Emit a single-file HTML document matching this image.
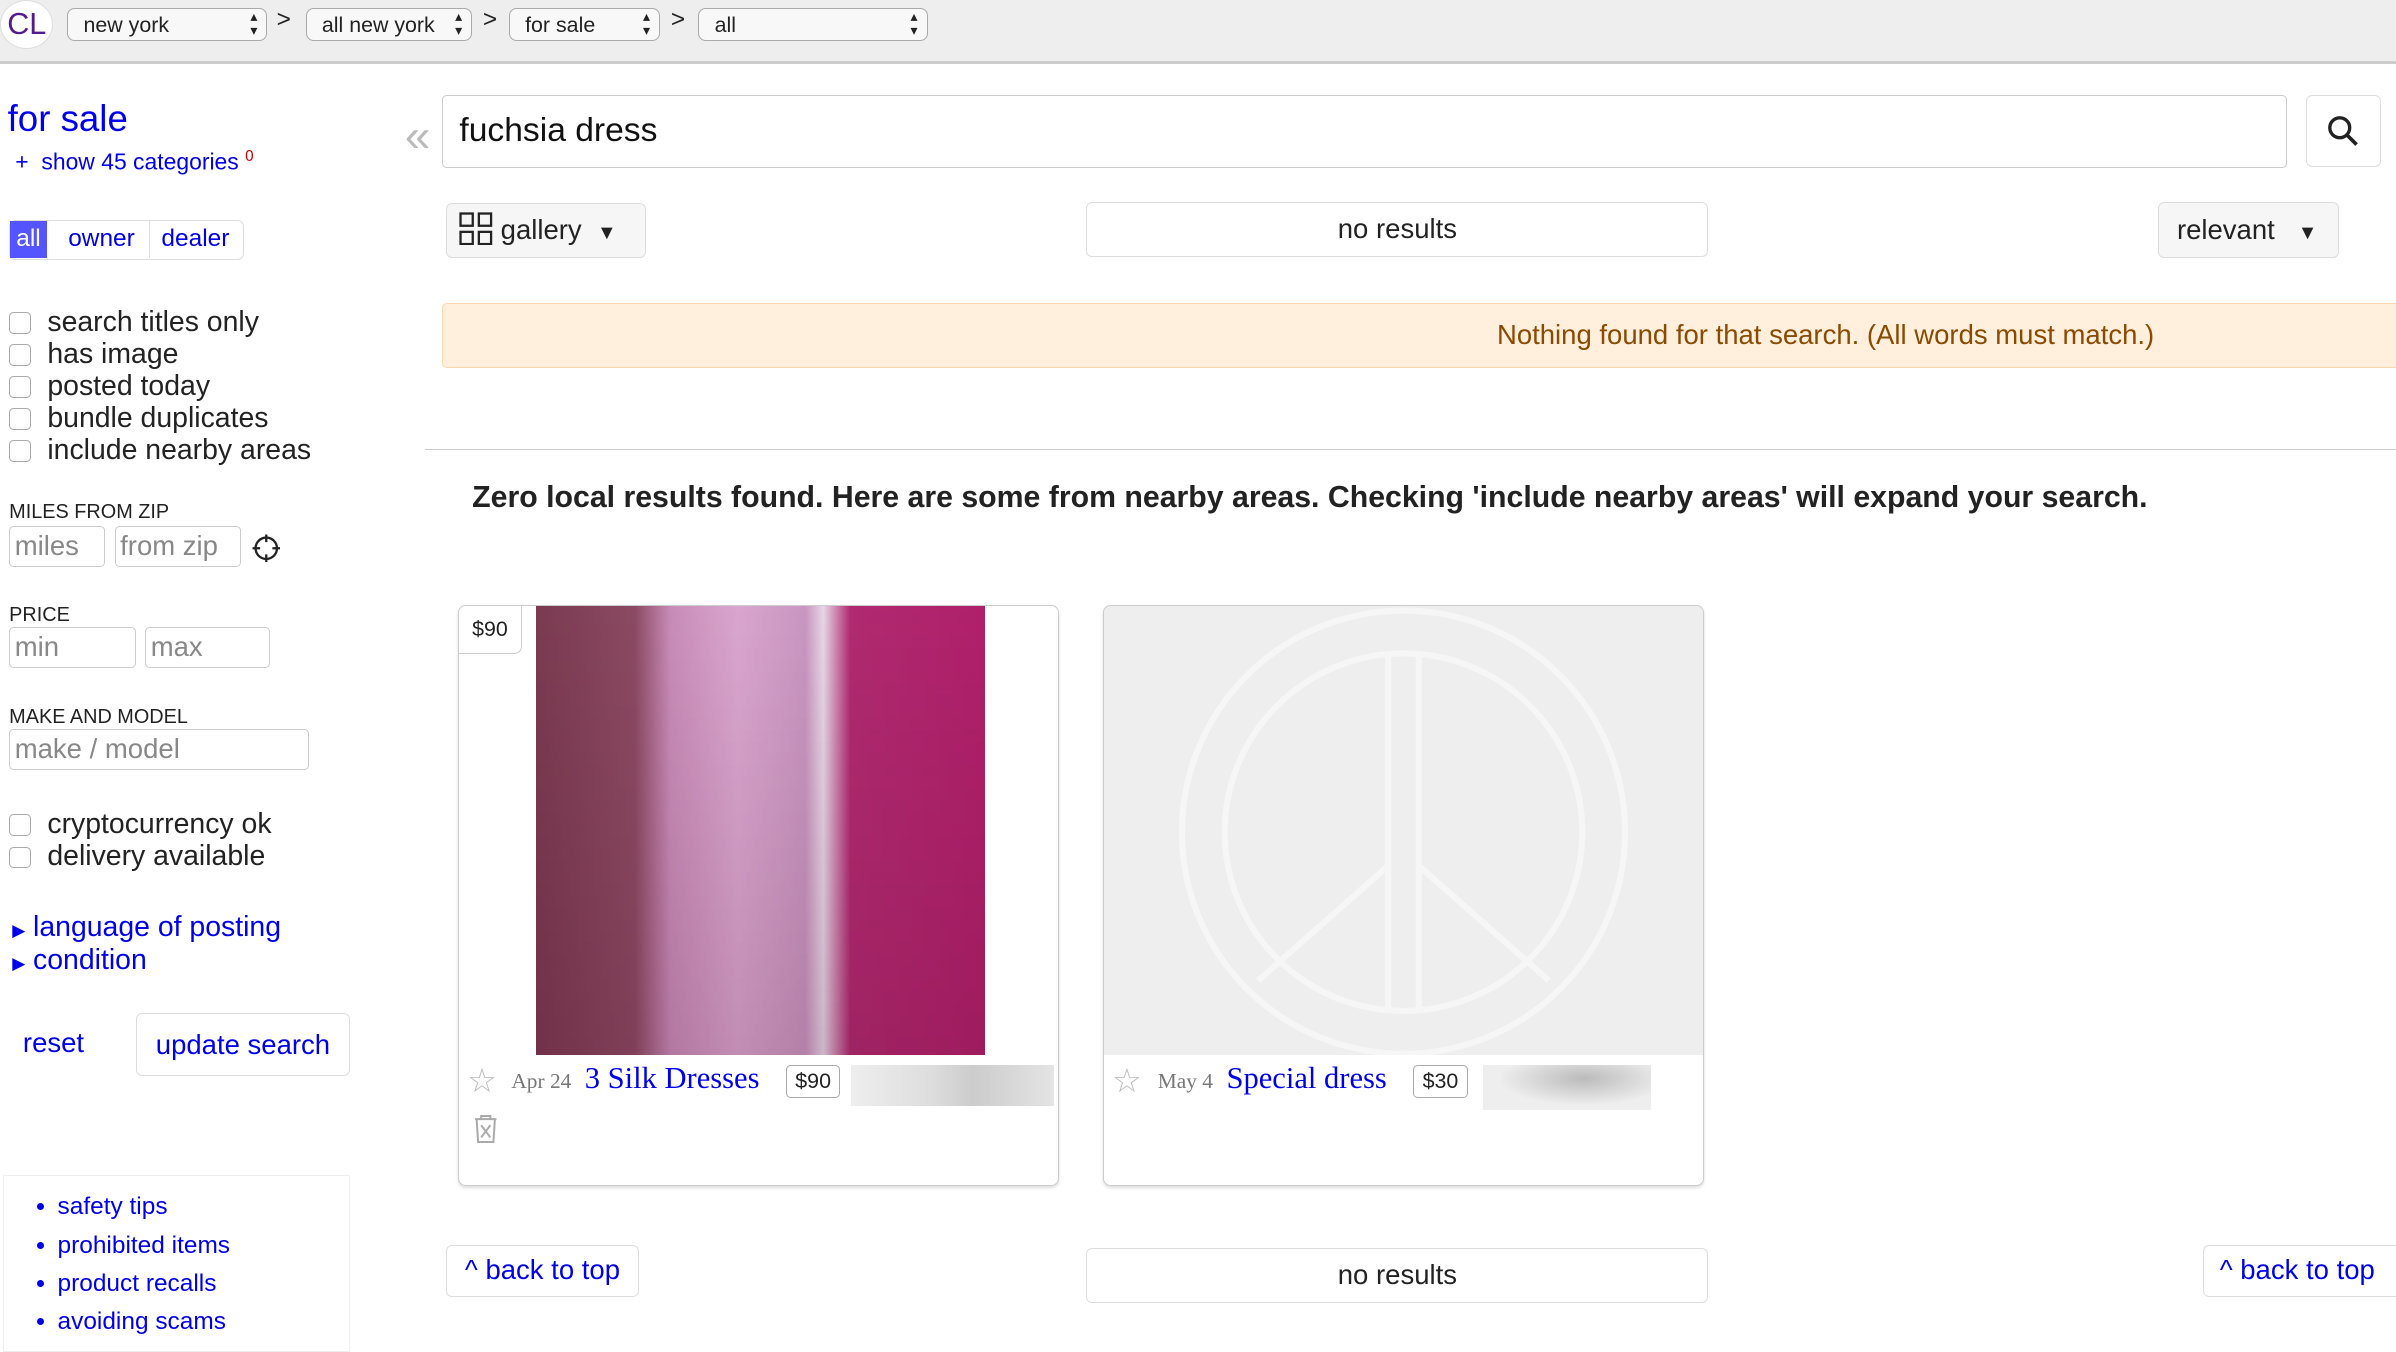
<!DOCTYPE html>
<html><head><meta charset="utf-8"><style>
html{zoom:1.52806}
body{margin:0;width:1568px;height:885px;overflow:hidden;position:relative;font-family:"Liberation Sans",Arial,sans-serif;color:#222;background:#fff}
.a{position:absolute}
.top{left:0;top:0;width:1568px;height:42px;background:#eee;border-bottom:2px solid #ccc;box-sizing:border-box}
.sel{position:absolute;top:5px;height:22px;border:1px solid #aaa;border-radius:5px;background:#f8f8f8;font-size:14px;line-height:21px;padding-left:10px;box-sizing:border-box}
.sel:after{content:"▴\A▾";white-space:pre;position:absolute;right:6px;top:1px;font-size:9px;line-height:9px}
.gt{position:absolute;top:4px;font-size:16px}
.blue{color:#00e}
.cb{position:absolute;left:6px;width:13px;height:13px;border:1px solid #aaa;border-radius:3px;background:#fff}
.lbl{position:absolute;left:31px;font-size:18.6px;line-height:21px}
.cap{position:absolute;left:6px;font-size:13px}
.inp{position:absolute;border:1px solid #ccc;border-radius:3px;box-sizing:border-box;font-size:18px;color:#888;padding-left:3px;line-height:25px}
.btn{position:absolute;border:1px solid #ddd;border-radius:4px;box-sizing:border-box;background:#f6f6f6;font-size:18px;text-align:center}
.card{position:absolute;top:396px;width:393px;height:380px;border:1px solid #ccc;border-radius:5px;box-sizing:border-box;box-shadow:0 1px 2px #ddd;overflow:hidden}
.serif{font-family:"Liberation Serif",serif}
</style></head><body>
<div class="a top"></div>
<div class="a" style="left:0;top:0;width:35px;height:32px;border-radius:50%;background:#fff;border:1px solid #ddd;color:#551a8b;font-size:20px;line-height:31px;text-align:center;box-sizing:border-box">CL</div>
<div class="sel" style="left:44px;width:131px">new york</div><div class="gt" style="left:181px">&gt;</div>
<div class="sel" style="left:200px;width:109px">all new york</div><div class="gt" style="left:316px">&gt;</div>
<div class="sel" style="left:333px;width:99px">for sale</div><div class="gt" style="left:439px">&gt;</div>
<div class="sel" style="left:457px;width:150px">all</div>

<div class="a blue" style="left:5px;top:64px;font-size:24px">for sale</div>
<div class="a blue" style="left:10px;top:97px;font-size:15px">+ &nbsp;show 45 categories <sup style="color:#c00;font-size:10px">0</sup></div>
<div class="a" style="left:265px;top:72px;font-size:30px;color:#bbb">«</div>
<div class="a" style="left:289px;top:62px;width:1208px;height:48px;border:1px solid #ccc;border-radius:3px;box-sizing:border-box;font-size:22px;line-height:46px;padding-left:11px;color:#111">fuchsia dress</div>
<div class="btn" style="left:1509px;top:62px;width:49px;height:47px;background:#fff"><svg width="22" height="22" viewBox="0 0 22 22" style="margin-top:12px"><circle cx="9" cy="9" r="6.5" fill="none" stroke="#222" stroke-width="2.2"/><line x1="14" y1="14" x2="20" y2="20" stroke="#222" stroke-width="2.4"/></svg></div>

<div class="a" style="left:6px;top:144px;width:154px;height:26px;border:1px solid #ddd;border-radius:4px;box-sizing:border-box;font-size:16px;line-height:24px">
<span style="position:absolute;left:0;top:0;width:24px;height:24px;background:#55f;color:#fff;text-align:center">all</span>
<span class="blue" style="position:absolute;left:38px">owner</span><span style="position:absolute;top:0;height:24px;border-left:1px solid #ddd;left:91px"></span><span class="blue" style="position:absolute;left:99px">dealer</span></div>

<div class="btn" style="left:292px;top:133px;width:131px;height:36px;line-height:34px;text-align:left;padding-left:8px"><svg width="22" height="22" viewBox="0 0 22 22" style="vertical-align:-4px"><g fill="none" stroke="#222" stroke-width="1.5"><rect x="1" y="1" width="8" height="8"/><rect x="13" y="1" width="8" height="8"/><rect x="1" y="13" width="8" height="8"/><rect x="13" y="13" width="8" height="8"/></g></svg> gallery &nbsp;<span style="font-size:13px">▼</span></div>
<div class="btn" style="left:711px;top:132px;width:407px;height:36px;line-height:34px;background:#fff">no results</div>
<div class="btn" style="left:1412px;top:132px;width:119px;height:37px;line-height:35px;text-align:left;padding-left:12px">relevant &nbsp;&nbsp;<span style="font-size:13px">▼</span></div>

<div class="a" style="left:289px;top:198px;width:1290px;height:43px;background:#ffefdc;border:1px solid #fbd8b0;box-sizing:border-box;border-radius:3px;color:#8a4a00;font-size:18px;line-height:41px;text-align:left;padding-left:690px">Nothing found for that search. (All words must match.)</div>
<div class="a" style="left:278px;top:294px;width:1290px;border-top:1px solid #ccc"></div>
<div class="a" style="left:309px;top:315px;font-size:19.8px;font-weight:bold;color:#222;white-space:nowrap">Zero local results found. Here are some from nearby areas. Checking 'include nearby areas' will expand your search.</div>

<div class="cb" style="top:204px"></div><div class="lbl" style="top:200px">search titles only</div>
<div class="cb" style="top:225px"></div><div class="lbl" style="top:221px">has image</div>
<div class="cb" style="top:246px"></div><div class="lbl" style="top:242px">posted today</div>
<div class="cb" style="top:267px"></div><div class="lbl" style="top:263px">bundle duplicates</div>
<div class="cb" style="top:288px"></div><div class="lbl" style="top:284px">include nearby areas</div>

<div class="cap" style="top:328px">MILES FROM ZIP</div>
<div class="inp" style="left:6px;top:344px;width:63px;height:27px">miles</div>
<div class="inp" style="left:75px;top:344px;width:83px;height:27px">from zip</div>
<svg class="a" style="left:164px;top:349px" width="20" height="20" viewBox="0 0 20 20"><circle cx="10" cy="10" r="7" fill="none" stroke="#222" stroke-width="1.5"/><path d="M10 1v5M10 14v5M1 10h5M14 10h5" stroke="#222" stroke-width="1.5"/></svg>
<div class="cap" style="top:395px">PRICE</div>
<div class="inp" style="left:6px;top:410px;width:83px;height:27px">min</div>
<div class="inp" style="left:95px;top:410px;width:82px;height:27px">max</div>
<div class="cap" style="top:462px">MAKE AND MODEL</div>
<div class="inp" style="left:6px;top:477px;width:196px;height:27px">make / model</div>

<div class="cb" style="top:533px"></div><div class="lbl" style="top:529px">cryptocurrency ok</div>
<div class="cb" style="top:554px"></div><div class="lbl" style="top:550px">delivery available</div>
<div class="a blue" style="left:8px;top:596px;font-size:18.6px"><span style="font-size:11px">▶</span> language of posting</div>
<div class="a blue" style="left:8px;top:618px;font-size:18.6px"><span style="font-size:11px">▶</span> condition</div>
<div class="a blue" style="left:15px;top:672px;font-size:18px">reset</div>
<div class="btn blue" style="left:89px;top:663px;width:140px;height:41px;line-height:40px;background:#fff">update search</div>

<div class="a" style="left:2px;top:769px;width:227px;height:116px;border:1px solid #eee;box-sizing:border-box;font-size:16px">
<ul class="blue" style="margin:8px 0 0;padding-left:35px;line-height:25px;color:#00e"><li>safety tips</li><li>prohibited items</li><li>product recalls</li><li>avoiding scams</li></ul></div>

<div class="card" style="left:300px">
<div class="a" style="left:50px;top:0;width:294px;height:294px;background:linear-gradient(180deg,rgba(255,255,255,0) 0%,rgba(60,0,30,.15) 100%),linear-gradient(90deg,#7a3a50 0%,#8b4a62 22%,#c88cb8 30%,#d9a6cf 45%,#c896c0 60%,#e6d6e6 64%,#b02a70 70%,#b0206a 100%)"></div>
<div class="a" style="left:0;top:0;width:40px;height:31px;background:#fff;border-right:1px solid #ccc;border-bottom:1px solid #ccc;border-radius:0 0 5px 0;font-size:14px;line-height:31px;text-align:center">$90</div>
<div class="a serif" style="left:5px;top:298px;font-size:22px;color:#bbb">☆</div>
<div class="a serif" style="left:34px;top:303px;font-size:14px;color:#777">Apr 24</div>
<div class="a serif blue" style="left:82px;top:298px;font-size:20px">3 Silk Dresses</div>
<div class="a" style="left:214px;top:300px;width:35px;height:22px;border:1px solid #aaa;border-radius:3px;box-sizing:border-box;font-size:14px;line-height:20px;text-align:center">$90</div>
<div class="a" style="left:256px;top:300px;width:133px;height:27px;background:linear-gradient(90deg,#eee,#ddd 40%,#ccc 60%,#e4e4e4)"></div>
<svg class="a" style="left:8px;top:332px" width="18" height="20" viewBox="0 0 18 20"><g fill="none" stroke="#aaa" stroke-width="1.3"><path d="M2 4h14M6 4V2h6v2M3 4l1 15h10l1-15M6 8l6 8M12 8l-6 8"/></g></svg>
</div>
<div class="card" style="left:722px">
<div class="a" style="left:0;top:0;width:393px;height:294px;background:#eee"><svg width="393" height="294"><g fill="none" stroke="#f6f6f6" stroke-width="4"><circle cx="196" cy="148" r="145"/><circle cx="196" cy="148" r="117"/><path d="M186 33v230M206 33v230M186 170l-85 75M206 170l85 75"/></g></svg></div>
<div class="a serif" style="left:5px;top:298px;font-size:22px;color:#bbb">☆</div>
<div class="a serif" style="left:35px;top:303px;font-size:14px;color:#777">May 4</div>
<div class="a serif blue" style="left:80px;top:298px;font-size:20px">Special dress</div>
<div class="a" style="left:202px;top:300px;width:36px;height:22px;border:1px solid #aaa;border-radius:3px;box-sizing:border-box;font-size:14px;line-height:20px;text-align:center">$30</div>
<div class="a" style="left:248px;top:300px;width:110px;height:30px;background:radial-gradient(ellipse at 60% 30%,#bbb,#eee 60%)"></div>
</div>

<div class="btn blue" style="left:292px;top:815px;width:126px;height:34px;line-height:32px;background:#fff">^ back to top</div>
<div class="btn" style="left:711px;top:817px;width:407px;height:36px;line-height:34px;background:#fff">no results</div>
<div class="btn blue" style="left:1442px;top:815px;width:130px;height:34px;line-height:32px;background:#fff;text-align:left;padding-left:10px">^ back to top</div>
</body></html>
